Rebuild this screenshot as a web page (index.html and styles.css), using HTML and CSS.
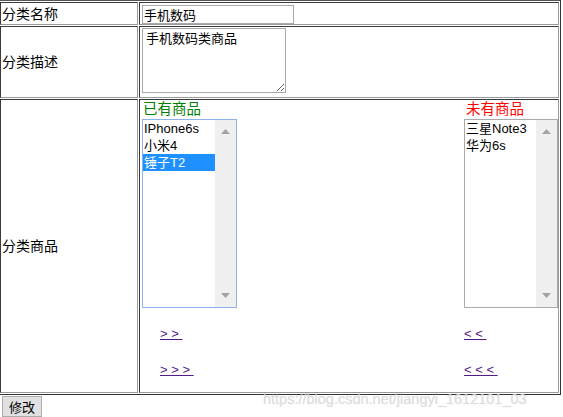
FILE: index.html
```html
<!DOCTYPE html>
<html lang="zh">
<head>
<meta charset="utf-8">
<title>分类修改</title>
<link rel="stylesheet" href="styles.css">
</head>
<body>
<table class="form">
  <tr>
    <td class="label">分类名称</td>
    <td class="field"><input class="name" type="text" value="手机数码"></td>
  </tr>
  <tr>
    <td class="label">分类描述</td>
    <td class="field"><textarea class="desc">手机数码类商品</textarea></td>
  </tr>
  <tr>
    <td class="label">分类商品</td>
    <td class="field">
      <div class="goods">
        <div class="side side-left">
          <div class="cap cap-has">已有商品</div>
          <div class="listbox listbox-focus">
            <ul class="items">
              <li>IPhone6s</li>
              <li>小米4</li>
              <li class="sel">锤子T2</li>
            </ul>
            <div class="sbar">
              <svg class="arr" width="9" height="5" viewBox="0 0 9 5"><path d="M0 5 L4.5 0 L9 5 Z"/></svg>
              <svg class="arr" width="9" height="5" viewBox="0 0 9 5"><path d="M0 0 L9 0 L4.5 5 Z"/></svg>
            </div>
          </div>
          <div class="moves">
            <div class="move"><a href="#" class="lnk">&gt; &gt;&nbsp;</a></div>
            <div class="move"><a href="#" class="lnk">&gt; &gt; &gt;&nbsp;</a></div>
          </div>
        </div>
        <div class="side side-right">
          <div class="cap cap-not">未有商品</div>
          <div class="listbox listbox-right">
            <ul class="items">
              <li>三星Note3</li>
              <li>华为6s</li>
            </ul>
            <div class="sbar">
              <svg class="arr" width="9" height="5" viewBox="0 0 9 5"><path d="M0 5 L4.5 0 L9 5 Z"/></svg>
              <svg class="arr" width="9" height="5" viewBox="0 0 9 5"><path d="M0 0 L9 0 L4.5 5 Z"/></svg>
            </div>
          </div>
          <div class="moves moves-right">
            <div class="move"><a href="#" class="lnk">&lt; &lt;&nbsp;</a></div>
            <div class="move"><a href="#" class="lnk">&lt; &lt; &lt;&nbsp;</a></div>
          </div>
        </div>
      </div>
    </td>
  </tr>
</table>
<button class="submit" type="button">修改</button>
<div class="watermark">https://blog.csdn.net/jiangyi_1612101_03</div>
</body>
</html>
```
FILE: styles.css
```css
html, body {
  margin: 0;
  padding: 0;
  background: #fff;
}

body {
  position: relative;
  height: 417px;
  overflow: hidden;
  font-family: "Liberation Sans", "Noto Sans CJK SC", sans-serif;
  font-size: 13px;
  color: #000;
}

.form {
  border-collapse: separate;
  border-spacing: 1px;
  border: 1px solid;
  border-color: #555 #333 #333 #9a9a9a;
  margin: 0 0 0 -2px;
}

.form td {
  padding: 0;
  border: 1px solid;
  border-color: #3a3a3a #9a9a9a #9a9a9a #3a3a3a;
}

.label {
  width: 135px;
  vertical-align: middle;
  font-size: 14px;
  line-height: 16px;
}

.form td.label {
  padding-left: 1px;
}

.field {
  width: 418px;
  vertical-align: top;
}

.name {
  display: block;
  box-sizing: border-box;
  width: 152px;
  height: 19px;
  margin: 2px 0 0 2px;
  padding: 0 1px;
  border: 1px solid #a9a9a9;
  font-family: inherit;
  font-size: 13px;
  line-height: 17px;
  color: #000;
  outline: none;
}

.desc {
  display: block;
  box-sizing: border-box;
  width: 144px;
  height: 65px;
  margin: 1px 0 4px 2px;
  padding: 2px 3px;
  border: 1px solid #a9a9a9;
  font-family: inherit;
  font-size: 13px;
  line-height: 16px;
  color: #000;
  outline: none;
}

.goods {
  display: flex;
  justify-content: space-between;
  align-items: flex-start;
  height: 292px;
  padding-left: 2px;
}

.side {
  display: flex;
  flex-direction: column;
}

.cap {
  height: 19px;
  line-height: 19px;
  font-size: 14.5px;
  padding-left: 1px;
}

.cap-has { color: #008000; }
.cap-not { color: #ff0000; padding-left: 2px; }

.listbox {
  display: flex;
  box-sizing: border-box;
  width: 95px;
  height: 189px;
  border: 1px solid #a9a9a9;
  background: #fff;
}

.listbox-focus {
  border-color: #8fb1ea;
}

.listbox-right {
  width: 94px;
}

.items {
  flex: 1;
  margin: 0;
  padding: 0;
  list-style: none;
}

.items li {
  height: 17px;
  line-height: 17px;
  padding-left: 1px;
  font-size: 13px;
  white-space: nowrap;
}

.items li.sel {
  background: #1e90ff;
  color: #fff;
}

.sbar {
  display: flex;
  flex-direction: column;
  justify-content: space-between;
  align-items: center;
  width: 21px;
  padding: 9px 0;
  box-sizing: border-box;
  background: #f0f0f0;
}

.arr {
  display: block;
  fill: #a3a3a3;
}

.moves {
  margin-top: 17px;
  padding-left: 18px;
}

.moves-right {
  padding-left: 0;
}

.move {
  height: 18px;
  line-height: 18px;
}

.move + .move {
  margin-top: 18px;
}

.lnk {
  color: #551a8b;
  text-decoration: underline;
  font-size: 13px;
}

.submit {
  display: block;
  box-sizing: border-box;
  width: 40px;
  height: 21px;
  margin: 1px 0 0 2px;
  padding: 0;
  border: 1px solid #adadad;
  background: #e1e1e1;
  font-family: inherit;
  font-size: 13px;
  color: #000;
}

.watermark {
  position: absolute;
  left: 263px;
  top: 390px;
  font-family: "Liberation Sans", sans-serif;
  font-size: 14.5px;
  line-height: 18px;
  color: rgba(220, 220, 220, 0.85);
  text-shadow: 0 0 1px rgba(160, 160, 160, 0.3);
  white-space: nowrap;
  pointer-events: none;
}
```
